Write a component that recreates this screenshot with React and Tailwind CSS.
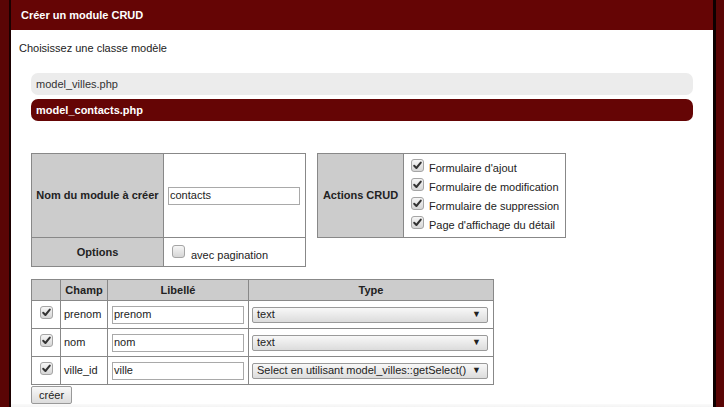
import React from "react";

const font = { fontFamily: '"Liberation Sans", Arial, sans-serif' };

function Check({ checked }) {
  return (
    <span className="inline-flex items-center justify-center w-[13px] h-[13px] rounded-[3px] border border-[#a5a5a5] bg-gradient-to-b from-[#f6f6f6] to-[#d6d6d6] align-middle">
      {checked && (
        <svg width="11" height="11" viewBox="0 0 11 11">
          <path d="M2.2 5.8 L4.4 8 L8.8 2.6" fill="none" stroke="#333" strokeWidth="2" strokeLinecap="round" strokeLinejoin="round" />
        </svg>
      )}
    </span>
  );
}

function Select({ value }) {
  return (
    <div className="flex items-center justify-between h-[16px] w-[236px] border border-[#9a9a9a] rounded-[2px] bg-gradient-to-b from-[#f8f8f8] to-[#dcdcdc] pl-[4px] pr-[6px] text-[11px] text-[#222] leading-none">
      <span>{value}</span>
      <span className="text-[9px]">▼</span>
    </div>
  );
}

export default function App() {
  const rows = [
    { champ: "prenom", lib: "prenom", type: "text" },
    { champ: "nom", lib: "nom", type: "text" },
    { champ: "ville_id", lib: "ville", type: "Select en utilisant model_villes::getSelect()" },
  ];
  const td = "border border-[#888]";
  return (
    <div style={font} className="w-[724px] h-[407px] overflow-hidden bg-[#560404] flex text-[11px] text-[#222]">
      <div className="w-[9px] shrink-0 bg-[#5a0505]" />
      <div className="w-[2px] shrink-0 bg-[#1a0000]" />
      <div className="w-[702px] shrink-0 bg-white flex flex-col overflow-hidden">
        <div className="h-[30px] shrink-0 bg-[#650505] flex items-center pl-[10px] text-white font-bold text-[11px]">
          Créer un module CRUD
        </div>
        <div className="shrink-0 pl-[8px] pt-[10px] h-[33px]">Choisissez une classe modèle</div>
        <div className="shrink-0 px-[20px] flex flex-col gap-[4px] pt-[10px]">
          <div className="h-[22px] rounded-[7px] bg-[#ececec] flex items-center pl-[5px] text-[#333]">model_villes.php</div>
          <div className="h-[22px] rounded-[7px] bg-[#650505] flex items-center pl-[5px] text-white font-bold">model_contacts.php</div>
        </div>
        <div className="shrink-0 pl-[20px] pt-[32px] flex items-start gap-[11px]">
          <table className="border-collapse w-[275px]">
            <tbody>
              <tr className="h-[84px]">
                <td className={`${td} bg-[#cccccc] font-bold text-center w-[132px] p-0`}>Nom du module à créer</td>
                <td className={`${td} pl-[4px] pr-[4px]`}>
                  <div className="h-[18px] w-[132px] border border-[#a9a9a9] flex items-center pl-[1px]">contacts</div>
                </td>
              </tr>
              <tr className="h-[29px]">
                <td className={`${td} bg-[#cccccc] font-bold text-center`}>Options</td>
                <td className={`${td} pl-[8px]`}>
                  <div className="flex items-center gap-[6px] pt-[3px]">
                    <span className="-mt-[6px]"><Check checked={false} /></span>
                    <span className="pt-[3px]">avec pagination</span>
                  </div>
                </td>
              </tr>
            </tbody>
          </table>
          <table className="border-collapse w-[249px]">
            <tbody>
              <tr className="h-[84px]">
                <td className={`${td} bg-[#cccccc] font-bold text-center w-[86px]`}>Actions CRUD</td>
                <td className={`${td} pl-[7px]`}>
                  <div className="flex flex-col gap-[6px]">
                    {["Formulaire d'ajout", "Formulaire de modification", "Formulaire de suppression", "Page d'affichage du détail"].map((t) => (
                      <div key={t} className="flex items-center gap-[5px] h-[13px]">
                        <span className="-mt-[5px]"><Check checked /></span>
                        <span className="pt-[3px]">{t}</span>
                      </div>
                    ))}
                  </div>
                </td>
              </tr>
            </tbody>
          </table>
        </div>
        <div className="shrink-0 pl-[20px] pt-[12px]">
          <table className="border-collapse w-[463px]">
            <thead>
              <tr className="h-[21px] bg-[#cccccc] font-bold">
                <td className={`${td} w-[29px]`}></td>
                <td className={`${td} w-[47px] text-center`}>Champ</td>
                <td className={`${td} w-[141px] text-center`}>Libellé</td>
                <td className={`${td} text-center`}>Type</td>
              </tr>
            </thead>
            <tbody>
              {rows.map((r) => (
                <tr key={r.champ} className="h-[28px]">
                  <td className={`${td} text-center`}>
                    <span className="inline-flex"><Check checked /></span>
                  </td>
                  <td className={`${td} pl-[3px]`}>{r.champ}</td>
                  <td className={`${td} pl-[4px]`}>
                    <div className="h-[18px] w-[132px] border border-[#a9a9a9] flex items-center pl-[1px]">{r.lib}</div>
                  </td>
                  <td className={`${td} pl-[3px]`}>
                    <Select value={r.type} />
                  </td>
                </tr>
              ))}
            </tbody>
          </table>
          <button className="mt-[1px] h-[18px] px-[7px] border border-[#999] rounded-[2px] bg-gradient-to-b from-[#f8f8f8] to-[#dcdcdc] text-[11px] text-[#222] leading-none" style={font}>
            créer
          </button>
        </div>
        <div className="shrink-0 h-[6px] bg-gradient-to-b from-[#fafafa] to-[#eeeeee]" />
      </div>
      <div className="w-[3px] shrink-0 bg-[#0d0000]" />
      <div className="flex-1 bg-[#5a0505]" />
    </div>
  );
}
